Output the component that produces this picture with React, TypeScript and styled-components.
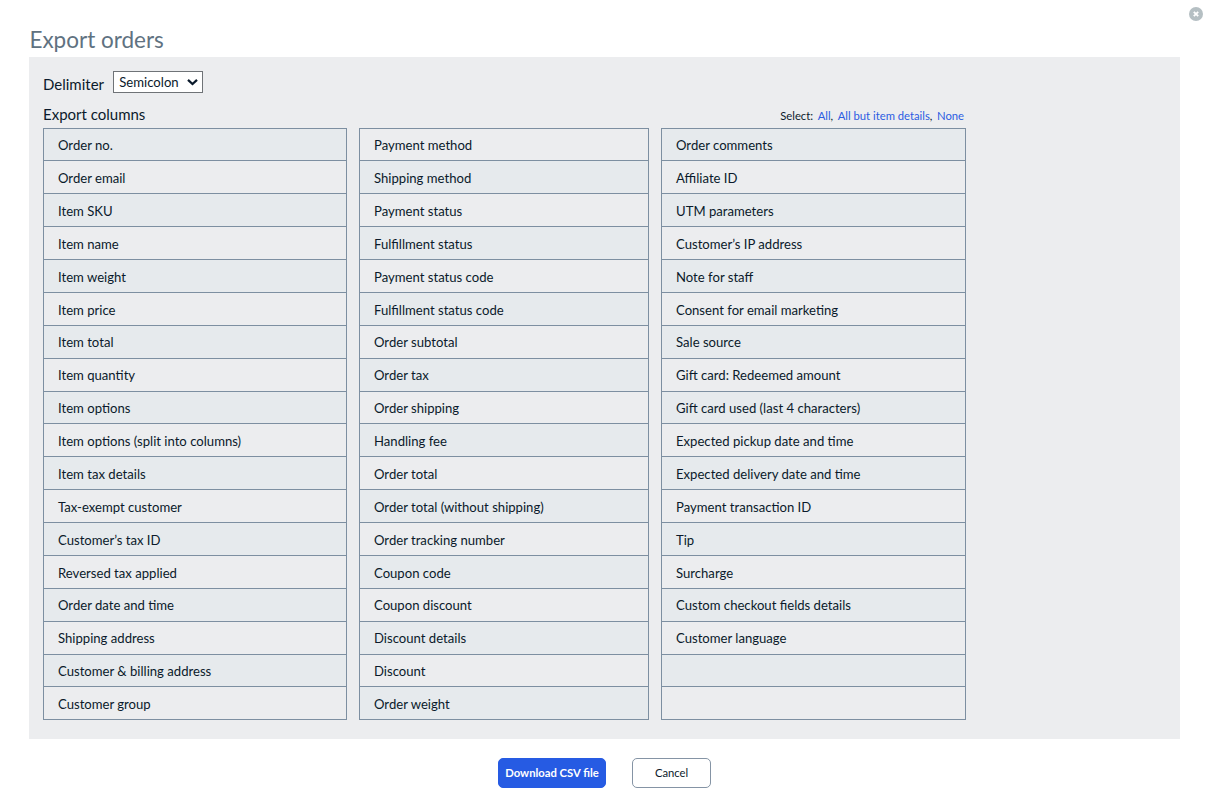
import React from 'react';
import styled, { createGlobalStyle } from 'styled-components';

const Global = createGlobalStyle`
  * { box-sizing: border-box; }
  body { margin: 0; background: #fff; font-family: Lato, sans-serif; color: #0b1a2b; }
`;

const Page = styled.div`
  position: relative;
  width: 1210px;
  height: 803px;
  padding: 24px 30px 0 29px;
  overflow: hidden;
`;

const Close = styled.button`
  position: absolute;
  top: 7px;
  right: 7px;
  width: 14px;
  height: 14px;
  padding: 0;
  border: 0;
  background: none;
  svg { display: block; }
`;

const Title = styled.h1`
  margin: 0;
  padding-left: 0.4px;
  height: 33px;
  line-height: 31px;
  font-size: 22.5px;
  font-weight: 400;
  color: #5f7281;
`;

const Panel = styled.section`
  height: 682px;
  padding: 14px 14px 0;
  background: #ecedef;
`;

const DelimiterRow = styled.div`
  display: flex;
  align-items: flex-start;
  height: 32px;
  font-size: 15px;
  label { line-height: 20px; padding-top: 3px; width: 70px; }
`;

const Select = styled.button`
  display: flex;
  align-items: center;
  justify-content: space-between;
  width: 90px;
  height: 22px;
  padding: 0 4px 0 5.3px;
  border: 1px solid #6f7377;
  background: #fff;
  color: inherit;
  font: 13.125px Lato, sans-serif;
`;

const Heading = styled.div`
  display: flex;
  justify-content: space-between;
  width: 921px;
  height: 24.6px;
  line-height: 23px;
  font-size: 15px;
`;

const Presets = styled.div`
  padding-top: 2px;
  font-size: 11.25px;
  line-height: 22px;
  white-space: nowrap;
  a { color: #2b5ce2; margin-left: 4.6px; }
`;

const Columns = styled.div`
  display: grid;
  grid-template-columns: 304px 290px 305px;
  column-gap: 12px;
`;

const List = styled.ul<{ $shadeEven?: boolean }>`
  margin: 0;
  padding: 0;
  list-style: none;
  border: 1px solid #7d8fa1;
  border-top: 0;
  li:nth-child(${p => (p.$shadeEven ? 'even' : 'odd')}) { background: #e6eaed; }
`;

const Item = styled.li`
  height: 32.875px;
  padding: 0.625px 0 0 14px;
  border-top: 1px solid #7d8fa1;
  font-size: 13.125px;
  line-height: 33px;
  white-space: nowrap;
`;

const Footer = styled.footer`
  display: flex;
  gap: 26px;
  padding: 19px 0 0 469px;
`;

const Button = styled.button<{ $primary?: boolean }>`
  width: ${p => (p.$primary ? 108 : 79)}px;
  height: 30px;
  padding: 0 0 1px;
  border: 1px solid ${p => (p.$primary ? '#265be3' : '#8594a5')};
  border-radius: 5px;
  background: ${p => (p.$primary ? '#265be3' : '#fff')};
  color: ${p => (p.$primary ? '#fff' : '#0b1a2b')};
  font: ${p => (p.$primary ? 700 : 400)} 11.25px Lato, sans-serif;
  white-space: nowrap;
`;

const columns = [
  ['Order no.', 'Order email', 'Item SKU', 'Item name', 'Item weight', 'Item price', 'Item total', 'Item quantity', 'Item options', 'Item options (split into columns)', 'Item tax details', 'Tax-exempt customer', 'Customer’s tax ID', 'Reversed tax applied', 'Order date and time', 'Shipping address', 'Customer & billing address', 'Customer group'],
  ['Payment method', 'Shipping method', 'Payment status', 'Fulfillment status', 'Payment status code', 'Fulfillment status code', 'Order subtotal', 'Order tax', 'Order shipping', 'Handling fee', 'Order total', 'Order total (without shipping)', 'Order tracking number', 'Coupon code', 'Coupon discount', 'Discount details', 'Discount', 'Order weight'],
  ['Order comments', 'Affiliate ID', 'UTM parameters', 'Customer’s IP address', 'Note for staff', 'Consent for email marketing', 'Sale source', 'Gift card: Redeemed amount', 'Gift card used (last 4 characters)', 'Expected pickup date and time', 'Expected delivery date and time', 'Payment transaction ID', 'Tip', 'Surcharge', 'Custom checkout fields details', 'Customer language', '', ''],
];

export default function App() {
  return (
    <Page>
      <Global />
      <Close aria-label="Close">
        <svg width="14" height="14" viewBox="0 0 14 14">
          <circle cx="7" cy="7" r="7" fill="#b5bfc3" />
          <path d="M4.800 4.800l4.400 4.400M9.200 4.800l-4.400 4.400" stroke="#fff" strokeWidth="1.800" />
        </svg>
      </Close>
      <Title>Export orders</Title>
      <Panel>
        <DelimiterRow>
          <label>Delimiter</label>
          <Select>
            Semicolon
            <svg width="12" height="8" viewBox="0 0 12 8" fill="none">
              <path d="M2 1.900L6.500 6.100l4.500-4.200" stroke="#0b1a2b" strokeWidth="2.200" />
            </svg>
          </Select>
        </DelimiterRow>
        <Heading>
          <span>Export columns</span>
          <Presets>
            Select:<a>All</a>,<a>All but item details</a>,<a>None</a>
          </Presets>
        </Heading>
        <Columns>
          {columns.map((items, c) => (
            <List key={c} $shadeEven={c === 1}>
              {items.map((text, i) => <Item key={i}>{text}</Item>)}
            </List>
          ))}
        </Columns>
      </Panel>
      <Footer>
        <Button $primary>Download CSV file</Button>
        <Button>Cancel</Button>
      </Footer>
    </Page>
  );
}
